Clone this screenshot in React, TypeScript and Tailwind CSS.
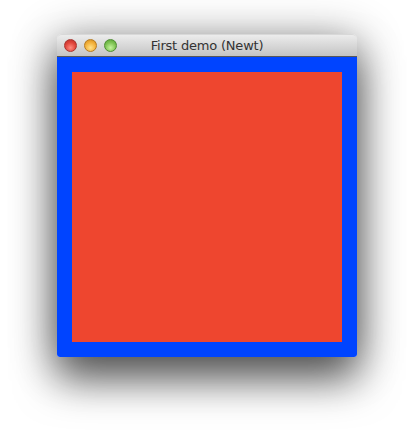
export default function App() {
    return (
        <div className="w-[414px] h-[436px] bg-white pt-[34px] pl-[57px] overflow-hidden">
            <div className="w-[300px] rounded-t-[5px] rounded-b-[3px] shadow-[0_24px_40px_rgba(0,0,0,0.5),0_6px_45px_rgba(0,0,0,0.45)]">
                {/* title bar */}
                <div className="relative h-[23px] flex items-center rounded-t-[5px] border-t border-[#d8d8d8] border-b border-b-[#585858] bg-gradient-to-b from-[#ececec] to-[#c4c4c4]">
                    <div className="flex items-center gap-[7px] pl-[7px]">
                        <span className="w-[13px] h-[13px] rounded-full border border-[#a8332f] bg-[radial-gradient(circle_at_50%_70%,#ff8a7f,#e0443b_55%,#b82b26)]" />
                        <span className="w-[13px] h-[13px] rounded-full border border-[#b77b1f] bg-[radial-gradient(circle_at_50%_70%,#ffe189,#f3b13b_55%,#cf8a1c)]" />
                        <span className="w-[13px] h-[13px] rounded-full border border-[#4f8d32] bg-[radial-gradient(circle_at_50%_70%,#c4f39c,#7fc353_55%,#53a131)]" />
                    </div>
                    <span className="absolute inset-x-0 top-[1px] text-center text-[13px] text-[#333] font-['DejaVu_Sans',sans-serif] tracking-[-0.2px]">
                        First demo (Newt)
                    </span>
                </div>
                {/* canvas */}
                <div className="h-[300px] bg-[#0044ff] p-[15px] rounded-b-[3px]">
                    <div className="w-full h-full bg-[#ee462f]" />
                </div>
            </div>
        </div>
    )
}
